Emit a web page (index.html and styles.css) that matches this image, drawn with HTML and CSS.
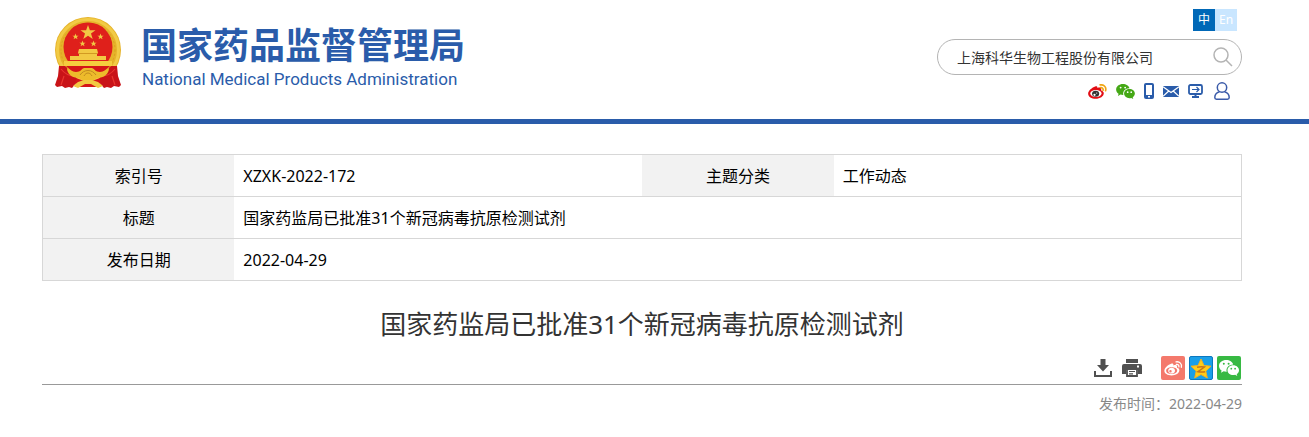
FILE: index.html
```html
<!DOCTYPE html>
<html lang="zh-CN">
<head>
  <meta charset="UTF-8" />
  <title>国家药监局已批准31个新冠病毒抗原检测试剂</title>
  <link rel="stylesheet" href="styles.css">
</head>
<body>

<!-- 图标定义 -->
<svg class="defs" aria-hidden="true">
  <symbol id="wechat" viewBox="0 0 20 16">
    <path fill="currentColor" fill-rule="evenodd" d="M7.200 0C3.200 0 0 2.600 0 5.900c0 1.900 1 3.500 2.600 4.600L2 12.700l2.700-1.400c.8.200 1.600.4 2.500.4h.5C6.700 7.700 9.700 4.600 14.200 4.400 13.600 1.900 10.700 0 7.200 0zM4.800 2.800a1 1 0 1 1 0 2 1 1 0 0 1 0-2zm4.800 0a1 1 0 1 1 0 2 1 1 0 0 1 0-2z"/>
    <path fill="currentColor" fill-rule="evenodd" d="M14.200 5.300c-3.200 0-5.700 2.200-5.700 4.900s2.500 4.900 5.700 4.900c.7 0 1.300-.1 1.900-.3l2.200 1.200-.6-1.900c1.400-.9 2.300-2.300 2.300-3.900 0-2.700-2.600-4.900-5.800-4.900zm-1.900 2.500a.9.900 0 1 1 0 1.800.9.900 0 0 1 0-1.800zm3.800 0a.9.900 0 1 1 0 1.800.9.900 0 0 1 0-1.800z"/>
  </symbol>
</svg>

<header class="header">
  <div class="wrap header-inner">
    <a class="logo" href="#">
      <svg class="emblem" viewBox="0 0 66 72" aria-hidden="true">
        <circle cx="33" cy="33" r="33" fill="#e6b32a"/>
        <circle cx="33" cy="33" r="30.500" fill="none" stroke="#f2cb45" stroke-width="3"/>
        <circle cx="33" cy="33" r="27" fill="none" stroke="#dba21f" stroke-dasharray="2 2"/>
        <circle cx="33" cy="30" r="24.500" fill="#df201b"/>
        <path fill="#f1c844" d="m33 8 1.900 5.200h5.600L36 16.600l1.700 5.400-4.700-3.300-4.700 3.300 1.700-5.400-4.500-3.400h5.600z"/>
        <path id="star" fill="#f1c844" d="m20.500 16.500.8 2.200h2.300l-1.800 1.400.7 2.200-2-1.300-1.900 1.300.7-2.200-1.900-1.400h2.300z"/>
        <use href="#star" x="25"/><use href="#star" x="7" y="7"/><use href="#star" x="18" y="7"/>
        <path fill="#f2c943" d="M24 32h18l1 4-1 1v2h9v4H15v-4h9v-2l-1-1z"/>
        <path stroke="#d29a22" d="M24 36.500h18"/>
        <path fill="#f5cd3e" d="M9 44h48v5H9z"/>
        <path fill="#d51518" d="M11 49h44l-8 7H19z"/>
        <path fill="#c91318" d="M4 49h6l9 8 4 7-6 7-3-1-4 1-3-2-5 1-2-2 3-9zM62 49h-6l-9 8-4 7 6 7 3-1 4 1 3-2 5 1 2-2-3-9z"/>
        <path fill="none" stroke="#e9352e" stroke-width="1.200" d="M6 52c4 5 9 7 13 7M60 52c-4 5-9 7-13 7M9 59l-3 9M57 59l3 9"/>
        <path fill="#edbb2b" d="M12 51c3 1 5 4 9 4 5 0 5-3 8-4h8c3 1 3 4 8 4 4 0 6-3 9-4 0 6-5 10-12 10l-5 3H29l-5-3c-7 0-12-4-12-10z"/>
        <path fill="none" stroke="#c18a20" d="M25 58c4-6 12-6 16 0M29 59c2-4 6-4 8 0"/>
        <path fill="#d51518" d="M21 61l8 3h8l8-3 1 9H20z"/>
        <path fill="#f2c943" d="m29 63-6 2-5 4 5 2 7-4h6l7 4 5-2-5-4-6-2z"/>
      </svg>
      <span class="logo-text">
        <span class="logo-cn">国家药品监督管理局</span>
        <span class="logo-en">National Medical Products Administration</span>
      </span>
    </a>

    <div class="tools">
      <nav class="lang" aria-label="语言">
        <a class="on" href="#">中</a><a href="#">En</a>
      </nav>
      <form class="search">
        <input type="text" value="上海科华生物工程股份有限公司" aria-label="搜索">
        <button type="button" aria-label="搜索">
          <svg width="20" height="20" viewBox="0 0 20 20" fill="none" stroke="#b4b4b4" stroke-width="1.500"><circle cx="8" cy="8" r="7"/><path d="m13 13 6 6"/></svg>
        </button>
      </form>
      <nav class="links" aria-label="快捷入口">
        <a href="#" aria-label="微博">
          <svg width="19" height="15" viewBox="0 0 20 16"><path fill="#e20d14" d="M7.500 2.600c1.500-.6 2.700 0 2.400 1.700 2-.8 4.300-.7 4.100 1.400-.1.700-.2 1-.1 1.200 1.400.3 2.800 1.200 2.800 3 0 3.200-4 5.900-8.700 5.900C3.700 15.800 0 13.700 0 10.400 0 7 4.500 3.600 7.500 2.600z"/><ellipse cx="8.300" cy="10.200" rx="6" ry="3.700" fill="#fff"/><ellipse cx="8" cy="10.500" rx="3.800" ry="3.200" fill="#333"/><circle cx="6.800" cy="11.500" r="1.200" fill="#fff"/><circle cx="9.200" cy="9.700" r=".6" fill="#fff"/><path fill="none" stroke="#f0a513" stroke-width="1.800" stroke-linecap="round" d="M12.800 1c3.900-.8 7 2.500 5.800 6.200M13.200 3.900c1.800-.4 3.200 1.100 2.700 2.700"/></svg>
        </a>
        <a href="#" aria-label="微信" class="green"><svg width="19" height="15"><use href="#wechat"/></svg></a>
        <a href="#" aria-label="手机版">
          <svg width="10" height="16" viewBox="0 0 10 16"><rect width="10" height="16" rx="2" fill="#2a5caa"/><path fill="#fff" d="M2 2h6v10H2zM4 13h2v1.500H4z"/></svg>
        </a>
        <a href="#" aria-label="邮箱">
          <svg width="16" height="11" viewBox="0 0 16 11"><path fill="#2a5caa" d="M0 0h16v11H0z"/><path fill="none" stroke="#fff" stroke-width="1.300" d="m0 .7 8 5.800 8-5.800M0 10.300l5.500-5M16 10.300l-5.500-5"/></svg>
        </a>
        <a href="#" aria-label="电脑版">
          <svg width="16" height="14" viewBox="0 0 16 14" fill="none" stroke="#2a5caa"><rect x="1" y="1" width="13" height="9" rx="1.500" stroke-width="1.800"/><path stroke-width="1.200" d="M4 5.500h7M8.500 3 11 5.500 8.500 8"/><path stroke-width="2" d="M7.500 10v3M4 13h7"/></svg>
        </a>
        <a href="#" aria-label="用户" class="user">
          <svg width="16" height="18" viewBox="0 0 16 18" fill="none" stroke="#3b5ba9" stroke-width="1.500"><circle cx="8" cy="5.500" r="4.700"/><path d="M5.500 9.800C2.500 10.700.8 13 .8 15.500c0 1.100.7 1.700 1.700 1.700h11c1 0 1.700-.6 1.700-1.700 0-2.500-1.700-4.800-4.700-5.700"/></svg>
        </a>
      </nav>
    </div>
  </div>
</header>

<main class="wrap">
  <table class="info">
    <tr>
      <th>索引号</th><td>XZXK-2022-172</td>
      <th>主题分类</th><td>工作动态</td>
    </tr>
    <tr>
      <th>标题</th><td colspan="3">国家药监局已批准31个新冠病毒抗原检测试剂</td>
    </tr>
    <tr>
      <th>发布日期</th><td colspan="3">2022-04-29</td>
    </tr>
  </table>

  <h1 class="title">国家药监局已批准31个新冠病毒抗原检测试剂</h1>

  <!-- 下载、打印、分享 -->
  <div class="actions">
    <button type="button" aria-label="下载">
      <svg width="18" height="18" viewBox="0 0 18 18"><path fill="#505050" d="M6.500 0h5v6H15l-6 6.500L3 6h3.500zM0 12h2v4h14v-4h2v6H0z"/></svg>
    </button>
    <button type="button" aria-label="打印">
      <svg width="20" height="18" viewBox="0 0 20 18"><path fill="#505050" d="M4 0h12v4H4zM2 5h16q2 0 2 2v8h-4v-4H4v4H0V7q0-2 2-2z"/><path fill="#fff" d="M15 6.500h2v2h-2z"/><path fill="none" stroke="#505050" stroke-width="1.800" d="M5 10v7h10v-7"/><path stroke="#505050" stroke-width="1.200" d="M7 12.500h6M7 14.800h4"/></svg>
    </button>
    <div class="share">
      <a class="weibo" href="#" aria-label="分享到微博">
        <svg width="19" height="17" viewBox="0 0 20 18"><path fill="#fff" fill-rule="evenodd" d="M7.500 4c1.500-.6 2.700 0 2.400 1.700 2-.8 4.100-.6 3.900 1.400l-.1 1.100c1.400.3 2.500 1.100 2.500 2.600 0 3-3.800 5.500-8.300 5.500C3.700 16.300.3 14.400.3 11.400.3 8.300 4.500 5 7.500 4zM8 7.700c-3.300 0-5.800 1.500-5.800 3.700S4.700 14.900 8 14.900s5.900-1.500 5.900-3.700S11.300 7.700 8 7.700z"/><path fill="#fff" fill-rule="evenodd" d="M8 8.300c2 0 3.600 1.300 3.600 3s-1.600 3.100-3.600 3.100-3.600-1.400-3.600-3.100 1.600-3 3.600-3zm-1.200 2.400a1.300 1.300 0 1 0 0 2.600 1.300 1.300 0 0 0 0-2.600z"/><path fill="none" stroke="#fff" stroke-width="1.400" stroke-linecap="round" d="M12.700 2c3.700-.8 6.600 2.300 5.600 5.700M13 4.700c1.800-.4 3.100.9 2.700 2.500"/></svg>
      </a>
      <a class="qzone" href="#" aria-label="分享到QQ空间">
        <svg width="22" height="21" viewBox="0 0 22 21"><path fill="#ffcd19" stroke="#f4b020" d="m11 1 3 6.500 7 .7-5.200 4.900L17.300 20 11 16.500 4.700 20l1.500-6.900L1 8.200l7-.7z"/><path fill="none" stroke="#c9741a" stroke-width="1.500" d="M7 9.200c2.800-.7 5-.7 7.500-.2L8 13.700c2.800.6 5 .5 7 0"/></svg>
      </a>
      <a class="weixin" href="#" aria-label="分享到微信"><svg width="20" height="16"><use href="#wechat"/></svg></a>
    </div>
  </div>
  <p class="date">发布时间：2022-04-29</p>
</main>

</body>
</html>
```
FILE: styles.css
```css
* {
  box-sizing: border-box;
}

body {
  margin: 0;
  background: #fff;
  color: #000;
  font-family: "Noto Sans", "Noto Sans CJK SC", sans-serif;
  font-size: 16px;
}

a {
  color: inherit;
  text-decoration: none;
}

svg {
  display: block;
}

button {
  padding: 0;
  border: none;
  background: none;
  cursor: pointer;
}

.defs {
  position: absolute;
  width: 0;
  height: 0;
}

.wrap {
  padding: 0 67px 0 42px;
}

/* 页头 */
.header {
  border-bottom: 5px solid #2a5caa;
}

.header-inner {
  display: flex;
  justify-content: space-between;
  align-items: flex-start;
  min-height: 119px;
}

.logo {
  display: flex;
  gap: 20px;
  padding: 17px 0 0 13px;
  color: #2a5caa;
}

.emblem {
  width: 66px;
  height: 72px;
}

.logo-text {
  display: flex;
  flex-direction: column;
  padding-top: 8px;
}

.logo-cn {
  font-size: 36px;
  line-height: 42px;
  font-weight: bold;
}

.logo-en {
  padding-left: 1px;
  font-family: Roboto, "Liberation Sans", sans-serif;
  font-size: 17px;
  line-height: 24px;
}

.tools {
  display: flex;
  flex-direction: column;
  align-items: flex-end;
  padding-top: 9px;
}

.lang {
  display: flex;
  margin-right: 5px;
}

.lang a {
  width: 22px;
  height: 22px;
  background: #c9e6ff;
  color: #fff;
  font-size: 12px;
  line-height: 22px;
  text-align: center;
}

.lang .on {
  background: #0068b7;
}

.search {
  display: flex;
  align-items: center;
  width: 305px;
  height: 36px;
  margin-top: 8px;
  padding: 0 8px 0 19px;
  border: 1px solid #b4b4b4;
  border-radius: 18px;
}

.search input {
  flex: 1;
  min-width: 0;
  padding: 0;
  border: none;
  outline: none;
  color: #333;
  font: 14px "Noto Sans", "Noto Sans CJK SC", sans-serif;
}

.links {
  display: flex;
  align-items: center;
  gap: 9px;
  margin: 7px 12px 0 0;
}

.green {
  color: #45a816;
}

.user {
  margin-left: 1px;
}

/* 信息表 */
.info {
  width: 100%;
  margin-top: 30px;
  border: 1px solid #d7d7d7;
  border-collapse: collapse;
  table-layout: fixed;
}

.info tr {
  border-bottom: 1px solid #d7d7d7;
}

.info th,
.info td {
  height: 42px;
  padding: 0 9px;
  line-height: 24px;
}

.info th {
  width: 16%;
  background: #f2f2f2;
  font-weight: normal;
}

/* 正文标题 */
.title {
  margin: 23px 0 0;
  color: #333;
  font-size: 26px;
  line-height: 40px;
  font-weight: normal;
  text-align: center;
}

.actions {
  display: flex;
  justify-content: flex-end;
  align-items: center;
  gap: 10px;
  margin-top: 12px;
  padding: 0 1px 4px 0;
  border-bottom: 1px solid #999;
}

.share {
  display: flex;
  gap: 4px;
  margin-left: 9px;
}

.share a {
  display: flex;
  align-items: center;
  justify-content: center;
  width: 24px;
  height: 24px;
  border-radius: 2px;
  color: #fff;
}

.weibo {
  background: #f4796c;
}

.qzone {
  background: #1a9fe8;
  border: 1px solid #0b78bf;
}

.weixin {
  background: #37b943;
}

.date {
  margin: 7px 0 0;
  color: #888;
  font-size: 14px;
  line-height: 24px;
  text-align: right;
}
```
